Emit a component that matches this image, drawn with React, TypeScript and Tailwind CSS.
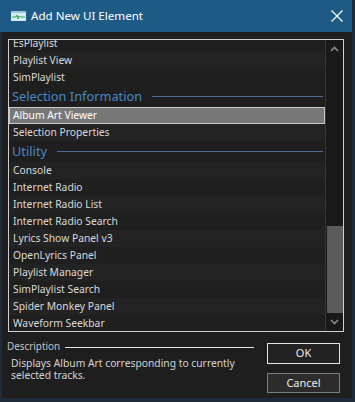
import React from 'react';

type Item = { label: string; kind?: 'header' | 'selected' };

const items: Item[] = [
    { label: 'EsPlaylist' },
    { label: 'Playlist View' },
    { label: 'SimPlaylist' },
    { label: 'Selection Information', kind: 'header' },
    { label: 'Album Art Viewer', kind: 'selected' },
    { label: 'Selection Properties' },
    { label: 'Utility', kind: 'header' },
    { label: 'Console' },
    { label: 'Internet Radio' },
    { label: 'Internet Radio List' },
    { label: 'Internet Radio Search' },
    { label: 'Lyrics Show Panel v3' },
    { label: 'OpenLyrics Panel' },
    { label: 'Playlist Manager' },
    { label: 'SimPlaylist Search' },
    { label: 'Spider Monkey Panel' },
    { label: 'Waveform Seekbar' },
];

const AppIcon = () => (
    <svg width="15" height="10" viewBox="0 0 15 10">
        <rect x="0" y="0" width="15" height="10" fill="#d6eaf0" />
        <rect x="0" y="0" width="15" height="2" fill="#9fc6d6" />
        <path d="M1 6 H5 L6 4 L7 8 L8 5 L9 6 H14" stroke="#3aa35a" strokeWidth="1" fill="none" />
    </svg>
);

const Chevron = ({ up }: { up?: boolean }) => (
    <svg width="9" height="6" viewBox="0 0 9 6">
        <path d={up ? 'M1 5 L4.5 1.5 L8 5' : 'M1 1 L4.5 4.5 L8 1'} stroke="#8a8a8a" strokeWidth="1.6" fill="none" />
    </svg>
);

const ListRow = ({ item, index }: { item: Item; index: number }) => {
    if (item.kind === 'header') {
        return (
            <div className="flex h-[21px] items-center pl-[3px] pr-[2px]">
                <span className="text-[12.8px] leading-none text-[#4a87c6]">{item.label}</span>
                <div className="ml-[10px] h-px flex-1 bg-[#4d6e90]" />
            </div>
        );
    }
    if (item.kind === 'selected') {
        return (
            <div className="flex h-[17px] items-center border border-[#c9c9c9] bg-[#787878] pl-[3px] text-[10.3px] text-white">
                {item.label}
            </div>
        );
    }
    return (
        <div
            className={`flex h-[17px] items-center pl-[4px] text-[10.3px] leading-none text-[#dadada] ${
                index % 2 === 0 ? 'bg-[#1f1f1f]' : 'bg-[#232323]'
            }`}
        >
            {item.label}
        </div>
    );
};

export default function App() {
    return (
        <div className="flex h-[402px] w-[355px] flex-col bg-[#1e2b38] font-['Noto_Sans',sans-serif]">
            {/* Title bar */}
            <div className="mr-[3px] flex h-[32px] items-center bg-[#1d5a86] pl-[11px] pr-[9px]">
                <AppIcon />
                <span className="ml-[5px] flex-1 text-[11.6px] text-white">Add New UI Element</span>
                <svg width="12" height="12" viewBox="0 0 12 12">
                    <path d="M0.5 0.5 L11.5 11.5 M11.5 0.5 L0.5 11.5" stroke="#ffffff" strokeWidth="1.2" />
                </svg>
            </div>

            {/* Body */}
            <div className="mb-[4px] ml-[2px] mr-[3px] flex flex-1 flex-col bg-[#1e1e1e] pl-[6px] pt-[7px]">
                {/* List box */}
                <div className="flex h-[293px] w-[336px] border border-[#d0d0d0]">
                    <div className="flex-1 overflow-hidden">
                        <div className="-mt-[5px]">
                            {items.map((item, i) => (
                                <ListRow key={item.label} item={item} index={i} />
                            ))}
                        </div>
                    </div>
                    {/* Scrollbar */}
                    <div className="flex w-[18px] flex-col border-l border-[#353535] bg-[#191919]">
                        <div className="flex h-[18px] items-center justify-center">
                            <Chevron up />
                        </div>
                        <div className="h-[168px]" />
                        <div className="ml-px h-[87px] bg-[#5b5b5b]" />
                        <div className="flex h-[17px] items-center justify-center">
                            <Chevron />
                        </div>
                    </div>
                </div>

                {/* Description + buttons */}
                <div className="mt-[9px] flex pr-[12px]">
                    <div className="flex-1 pr-[13px]">
                        <div className="flex h-[12px] items-center">
                            <span className="-ml-px text-[9.9px] leading-none text-[#c4c4c4]">Description</span>
                            <div className="ml-[5px] h-px flex-1 bg-[#e6e6e6]" />
                        </div>
                        <p className="mt-[4px] pl-[3px] text-[10.3px] leading-[12px] text-[#d4d4d4]">
                            <span className="block">Displays Album Art corresponding to currently</span>
                            <span className="block">selected tracks.</span>
                        </p>
                    </div>
                    <div className="flex w-[73px] flex-col pt-[2px]">
                        <button className="flex h-[21px] items-center justify-center border border-[#e4e4e4] bg-[#222222] text-[11px] text-[#ececec]">
                            OK
                        </button>
                        <button className="mt-[9px] flex h-[20px] items-center justify-center border border-[#7e7e7e] bg-[#2c2c2c] text-[11px] text-[#ececec]">
                            Cancel
                        </button>
                    </div>
                </div>
            </div>
        </div>
    );
}
